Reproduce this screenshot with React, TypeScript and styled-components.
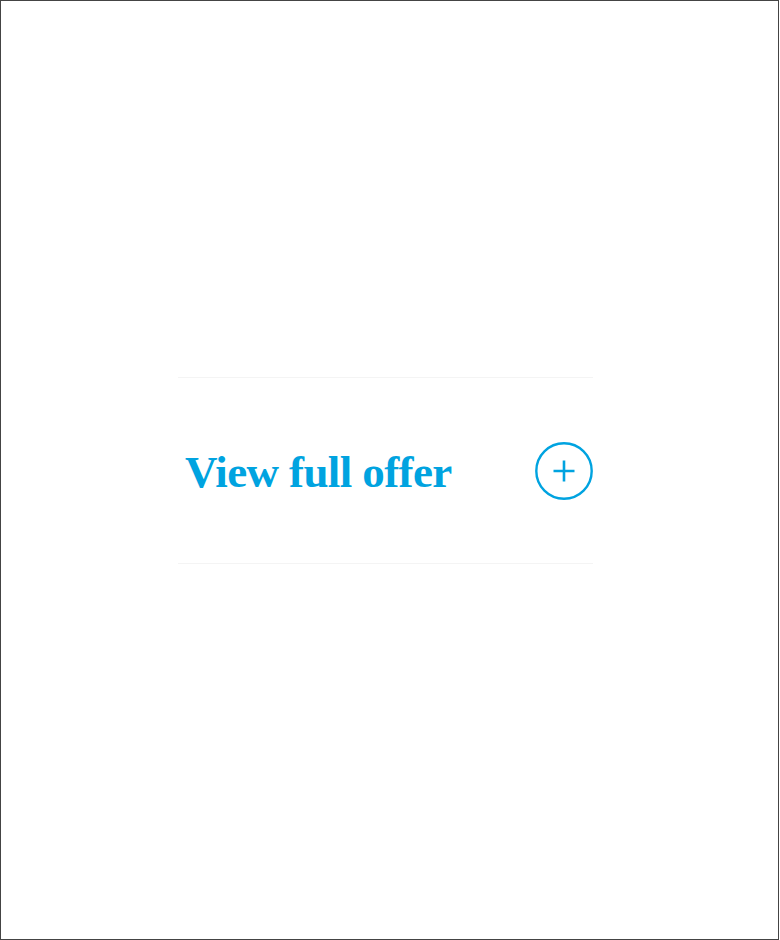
import React from "react";
import styled, { createGlobalStyle } from "styled-components";

const Global = createGlobalStyle`
  html, body { margin: 0; padding: 0; background: #ffffff; }
  * { box-sizing: border-box; }
`;

const Frame = styled.div`
  width: 779px;
  height: 940px;
  border: 1px solid #444444;
  background: #ffffff;
  display: flex;
  align-items: center;
  padding-left: 177px;
`;

const Section = styled.section`
  width: 415px;
  border-top: 1px solid #f4f4f4;
  border-bottom: 1px solid #f4f4f4;
  padding: 64px 0 63px 7px;
  display: flex;
  align-items: center;
  justify-content: space-between;
`;

const Title = styled.a`
  font-family: "Liberation Serif", "Times New Roman", serif;
  font-weight: 700;
  font-size: 45px;
  letter-spacing: -0.6px;
  line-height: 1;
  color: #00a3e0;
  text-decoration: none;
  margin-top: 4px;
`;

const CircleButton = styled.button`
  width: 58px;
  height: 58px;
  border: none;
  background: transparent;
  padding: 0;
  display: flex;
  align-items: center;
  justify-content: center;
  cursor: pointer;
`;

export default function App() {
  return (
    <>
      <Global />
      <Frame>
        <Section>
          <Title href="#">View full offer</Title>
          <CircleButton aria-label="Expand">
            <svg width="58" height="58" viewBox="0 0 58 58">
              <circle cx="29" cy="29" r="27.7" stroke="#00a3e0" strokeWidth="2.4" fill="none" />
              <path d="M29 18.5v21M18.5 29h21" stroke="#00a3e0" strokeWidth="2.6" fill="none" />
            </svg>
          </CircleButton>
        </Section>
      </Frame>
    </>
  );
}
